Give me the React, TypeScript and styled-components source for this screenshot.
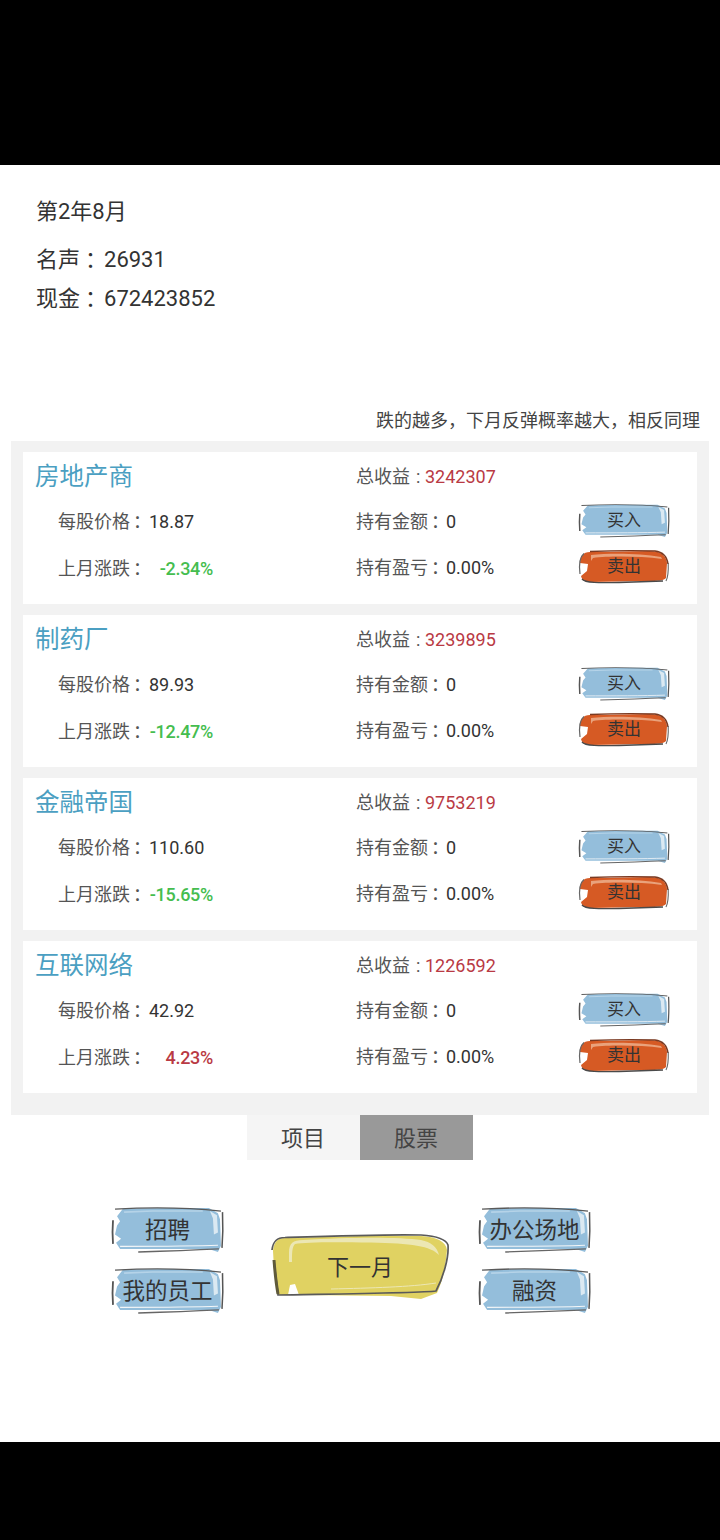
import styled, { createGlobalStyle } from "styled-components"

const GlobalStyle = createGlobalStyle`
	html,
	body {
		margin: 0;
		padding: 0;
		background: #000;
	}

	body {
		font-family: Roboto, "Noto Sans CJK SC", sans-serif;
	}
`

const Screen = styled.div`
	display: flex;
	flex-direction: column;
	width: 720px;
	height: 1540px;
	background: #000;
`

const Main = styled.main`
	height: 1277px;
	margin-top: 165px;
	background: #fff;
`

const Info = styled.section`
	display: flex;
	flex-direction: column;
	height: 241px;
	padding: 28px 0 0 36px;
	box-sizing: border-box;
	color: #333;
	font-size: 22px;
`

const DateLine = styled.div`
	height: 38px;
	line-height: 38px;
	margin-bottom: 9px;
`

const InfoLine = styled.div`
	height: 39px;
	line-height: 39px;
	white-space: pre;
`

const InfoColon = styled.span`
	margin: 0 -3px 0 5px;
`

const Hint = styled.div`
	height: 30px;
	margin-bottom: 5px;
	padding-right: 20px;
	line-height: 30px;
	font-size: 18px;
	color: #444;
	text-align: right;
`

const Panel = styled.section`
	display: flex;
	flex-direction: column;
	gap: 11px;
	width: 698px;
	height: 674px;
	margin-left: 11px;
	padding: 11px 12px 0;
	box-sizing: border-box;
	background: #f2f2f2;
`

const Card = styled.article`
	display: grid;
	grid-template-columns: 333px 223px 90px;
	grid-template-rows: 46px 46px 46px;
	align-items: center;
	height: 152px;
	padding-top: 1px;
	box-sizing: border-box;
	background: #fff;
	font-size: 18px;
`

const Title = styled.h2`
	margin: 0 0 3px 12px;
	font-size: 24.5px;
	font-weight: 400;
	color: #4b9fc2;
`

const Field = styled.div<{ $indent?: boolean; $lift?: number }>`
	display: flex;
	align-items: center;
	padding-left: ${(props) => (props.$indent ? 35 : 0)}px;
	margin-bottom: ${(props) => props.$lift ?? 0}px;
	white-space: nowrap;
`

const Label = styled.span<{ $width: number }>`
	width: ${(props) => props.$width}px;
	color: #555;
	transform: translateY(-1px);
`

const LabelColon = styled.span<{ $shift: number }>`
	margin-left: ${(props) => props.$shift}px;
`

const Value = styled.span`
	color: #333;
`

const Earnings = styled.span`
	color: #b93a44;
`

const Change = styled.span<{ $up: boolean }>`
	width: 65px;
	text-align: right;
	font-weight: 500;
	letter-spacing: -0.3px;
	color: ${(props) => (props.$up ? "#b93a44" : "#45bd4f")};
`

const SketchButton = styled.button<{ $w: number; $h: number; $size: number }>`
	position: relative;
	display: flex;
	align-items: center;
	justify-content: center;
	width: ${(props) => props.$w}px;
	height: ${(props) => props.$h}px;
	padding: 0;
	border: 0;
	background: none;
	font-family: inherit;
	font-size: ${(props) => props.$size}px;
	color: #333;
	white-space: nowrap;

	svg {
		position: absolute;
		inset: 0;
		width: 100%;
		height: 100%;
		overflow: visible;
		filter: blur(0.3px);
	}

	span {
		position: relative;
		transform: translateY(-2px);
	}
`

const TradeButton = styled(SketchButton)`
	margin-bottom: 4px;
`

const NextButton = styled(SketchButton)`
	margin-top: 13px;
`

const Tabs = styled.nav`
	display: flex;
	justify-content: center;
	margin-right: 1px;
`

const Tab = styled.div<{ $active?: boolean }>`
	width: 113px;
	height: 45px;
	line-height: 47px;
	text-align: center;
	font-size: 22px;
	color: #444;
	background: ${(props) => (props.$active ? "#999" : "#f5f5f5")};
`

const Actions = styled.section`
	display: grid;
	grid-template-columns: 111px 178px 111px;
	column-gap: 48px;
	align-items: center;
	width: 478px;
	margin: 47px 0 0 112px;
`

const ActionColumn = styled.div`
	display: flex;
	flex-direction: column;
	gap: 16px;
`

const RightColumn = styled(ActionColumn)`
	margin-left: -18px;
`

const BlueArt = () => (
	<svg viewBox="0 0 110 44" preserveAspectRatio="none">
		<path
			d="M5 9 L11 1.5 L60 1 L96 1 L105 6 L107 12 L108 38 L105 44 L96 41 L30 41 L8 41 L4 35 L9 31 L3 27 L5 18 L8 14 Z"
			fill="#94bedb"
		/>
		<path d="M97 4 L104 8 L105 25 L101 27 L100 11 Z" fill="#dbe9f2" />
		<path d="M12 5 L40 4 L90 4" stroke="#b5d3e8" strokeWidth="1.5" fill="none" />
		<path d="M3 2 C40 0 80 1 108 4" stroke="#5a5a5a" strokeWidth="1.3" fill="none" />
		<path d="M109.5 5 C110 16 110 28 109 40" stroke="#555" strokeWidth="1.5" fill="none" />
		<path d="M26 44 C60 43 85 42 106 41" stroke="#666" strokeWidth="1.3" fill="none" />
		<path d="M8 38.5 C40 38.5 80 38.5 105 37.5" stroke="#f3f6f8" strokeWidth="1" fill="none" />
		<path d="M1 13 C0.4 20 0.4 28 1 36" stroke="#555" strokeWidth="1.8" fill="none" />
	</svg>
)

const RedArt = () => (
	<svg viewBox="0 0 90 33" preserveAspectRatio="none">
		<path
			d="M1 13 C1 6 4 2 11 2 L70 1 C82 1 87 5 88 13 L87 28 C84 31 78 31 70 31 L12 32 C6 32 3 30 2 26 L8 21 L9 14 Z"
			fill="#d65a24"
		/>
		<path d="M12 5 C30 3 60 3 82 7 L83 9 C60 6 30 6 14 8 L12 11 Z" fill="#e9a27c" />
		<path d="M11 1.5 C35 0.5 60 0.5 76 1 C84 2 88 6 89 14" stroke="#7a3a22" strokeWidth="1.4" fill="none" />
		<path d="M89.2 13 C89.5 20 89 27 87 31" stroke="#666" strokeWidth="1.1" fill="none" />
		<path d="M3 29 C6 33 20 33 40 32.5 L84 31" stroke="#4a4a4a" strokeWidth="1.3" fill="none" />
		<path d="M1 24 C0 16 0.5 7 5 3.5" stroke="#666" strokeWidth="1.2" fill="none" />
	</svg>
)

const YellowArt = () => (
	<svg viewBox="0 0 178 67" preserveAspectRatio="none">
		<path
			d="M2 18 C3 9 6 5 14 5 L90 3 L150 3 C165 4 175 8 176 17 C175 30 172 48 166 60 L150 66 L120 63 L30 62 L7 62 L3 35 Z"
			fill="#e0d262"
		/>
		<path
			d="M18 20 C18 10 22 7 32 7 C80 4 130 4 150 7 C160 9 166 14 168 22 C160 13 140 10.5 100 9.5 C60 9 34 9 24 11 C21 14 21 20 21 29 L18 29 Z"
			fill="#ece7b4"
		/>
		<path d="M17 62 L19 52 L24 51 L28 62 Z" fill="#fff" />
		<path
			d="M1 17 C2 8 6 4.5 14 4.5 C60 3 120 1 150 2 C165 3 175 6 177 12 C178 25 172 45 165 58 C150 60 60 61 7 62 C6 50 4 40 3 28"
			stroke="#5a5a5a"
			strokeWidth="1.7"
			fill="none"
		/>
		<path d="M3 27 C4 40 5 50 7 61" stroke="#5f5a3a" strokeWidth="3" fill="none" />
		<path d="M60 56 C100 55 140 54 165 50" stroke="#ece7b4" strokeWidth="1" fill="none" />
	</svg>
)

type StockData = {
	name: string
	earnings: string
	price: string
	change: string
}

const stocks: StockData[] = [
	{ name: "房地产商", earnings: "3242307", price: "18.87", change: "-2.34%" },
	{ name: "制药厂", earnings: "3239895", price: "89.93", change: "-12.47%" },
	{ name: "金融帝国", earnings: "9753219", price: "110.60", change: "-15.65%" },
	{ name: "互联网络", earnings: "1226592", price: "42.92", change: "4.23%" },
]

const Stock = ({ stock }: { stock: StockData }) => {
	return (
		<Card>
			<Title>{stock.name}</Title>
			<Field>
				<Label $width={69}>
					总收益<LabelColon $shift={6}>:</LabelColon>
				</Label>
				<Earnings>{stock.earnings}</Earnings>
			</Field>
			<div />
			<Field $indent $lift={2}>
				<Label $width={91}>
					每股价格<LabelColon $shift={3}>：</LabelColon>
				</Label>
				<Value>{stock.price}</Value>
			</Field>
			<Field $lift={2}>
				<Label $width={90}>
					持有金额<LabelColon $shift={3}>：</LabelColon>
				</Label>
				<Value>0</Value>
			</Field>
			<TradeButton $w={90} $h={33} $size={17}>
				<BlueArt />
				<span>买入</span>
			</TradeButton>
			<Field $indent>
				<Label $width={90}>
					上月涨跌<LabelColon $shift={3}>：</LabelColon>
				</Label>
				<Change $up={!stock.change.startsWith("-")}>{stock.change}</Change>
			</Field>
			<Field $lift={2}>
				<Label $width={90}>
					持有盈亏<LabelColon $shift={3}>：</LabelColon>
				</Label>
				<Value>0.00%</Value>
			</Field>
			<TradeButton $w={90} $h={33} $size={17}>
				<RedArt />
				<span>卖出</span>
			</TradeButton>
		</Card>
	)
}

const App = () => {
	return (
		<Screen>
			<GlobalStyle />
			<Main>
				<Info>
					<DateLine>第2年8月</DateLine>
					<InfoLine>
						名声<InfoColon>：</InfoColon>26931
					</InfoLine>
					<InfoLine>
						现金<InfoColon>：</InfoColon>672423852
					</InfoLine>
				</Info>
				<Hint>跌的越多，下月反弹概率越大，相反同理</Hint>
				<Panel>
					{stocks.map((stock) => (
						<Stock key={stock.name} stock={stock} />
					))}
				</Panel>
				<Tabs>
					<Tab>项目</Tab>
					<Tab $active>股票</Tab>
				</Tabs>
				<Actions>
					<ActionColumn>
						<SketchButton $w={111} $h={45} $size={22.5}>
							<BlueArt />
							<span>招聘</span>
						</SketchButton>
						<SketchButton $w={111} $h={45} $size={22.5}>
							<BlueArt />
							<span>我的员工</span>
						</SketchButton>
					</ActionColumn>
					<NextButton $w={178} $h={67} $size={22}>
						<YellowArt />
						<span>下一月</span>
					</NextButton>
					<RightColumn>
						<SketchButton $w={111} $h={45} $size={22.5}>
							<BlueArt />
							<span>办公场地</span>
						</SketchButton>
						<SketchButton $w={111} $h={45} $size={22.5}>
							<BlueArt />
							<span>融资</span>
						</SketchButton>
					</RightColumn>
				</Actions>
			</Main>
		</Screen>
	)
}

export default App
